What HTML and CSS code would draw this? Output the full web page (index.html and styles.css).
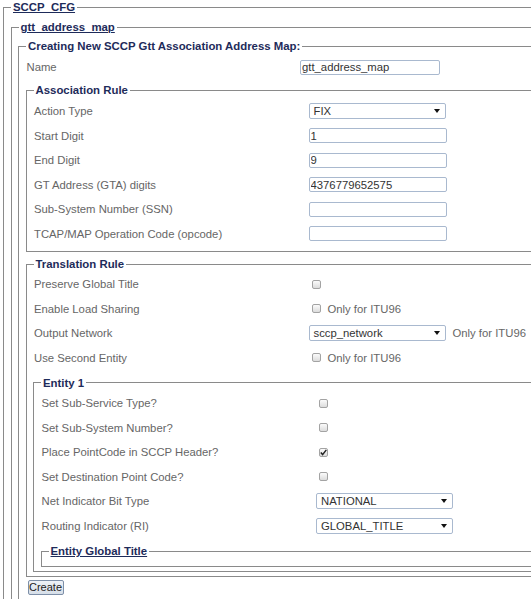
FILE: index.html
```html
<!DOCTYPE html>
<html>
<head>
<meta charset="utf-8">
<link rel="stylesheet" href="styles.css">
</head>
<body>
<fieldset class="fs fs-top">
  <legend><a href="#">SCCP_CFG</a></legend>
  <fieldset class="fs fs-gtt">
    <legend><a href="#">gtt_address_map</a></legend>
    <fieldset class="fs fs-create">
      <legend>Creating New SCCP Gtt Association Address Map:</legend>
      <div class="row row-name"><span class="lbl">Name</span><input class="txt txt-name" type="text" value="gtt_address_map"></div>

      <fieldset class="fs fs-assoc">
        <legend>Association Rule</legend>
        <div class="row"><span class="lbl">Action Type</span><div class="sel"><span>FIX</span><i class="arrow"></i></div></div>
        <div class="row"><span class="lbl">Start Digit</span><input class="txt" type="text" value="1"></div>
        <div class="row"><span class="lbl">End Digit</span><input class="txt" type="text" value="9"></div>
        <div class="row"><span class="lbl">GT Address (GTA) digits</span><input class="txt" type="text" value="4376779652575"></div>
        <div class="row"><span class="lbl">Sub-System Number (SSN)</span><input class="txt" type="text" value=""></div>
        <div class="row"><span class="lbl">TCAP/MAP Operation Code (opcode)</span><input class="txt" type="text" value=""></div>
      </fieldset>

      <fieldset class="fs fs-trans">
        <legend>Translation Rule</legend>
        <div class="row"><span class="lbl">Preserve Global Title</span><span class="ck"></span></div>
        <div class="row"><span class="lbl">Enable Load Sharing</span><span class="ck"></span><span class="note">Only for ITU96</span></div>
        <div class="row"><span class="lbl">Output Network</span><div class="sel"><span>sccp_network</span><i class="arrow"></i></div><span class="note note-sel">Only for ITU96</span></div>
        <div class="row"><span class="lbl">Use Second Entity</span><span class="ck"></span><span class="note">Only for ITU96</span></div>

        <fieldset class="fs fs-entity">
          <legend>Entity 1</legend>
          <div class="row"><span class="lbl">Set Sub-Service Type?</span><span class="ck"></span></div>
          <div class="row"><span class="lbl">Set Sub-System Number?</span><span class="ck"></span></div>
          <div class="row"><span class="lbl">Place PointCode in SCCP Header?</span><span class="ck ck-on"><svg width="7" height="7" viewBox="0 0 7 7"><path d="M0.8 3.6 L2.6 5.6 L6.3 0.9" fill="none" stroke="#222" stroke-width="1.5"/></svg></span></div>
          <div class="row"><span class="lbl">Set Destination Point Code?</span><span class="ck"></span></div>
          <div class="row"><span class="lbl">Net Indicator Bit Type</span><div class="sel"><span>NATIONAL</span><i class="arrow"></i></div></div>
          <div class="row"><span class="lbl">Routing Indicator (RI)</span><div class="sel"><span>GLOBAL_TITLE</span><i class="arrow"></i></div></div>

          <fieldset class="fs fs-egt">
            <legend><a href="#">Entity Global Title</a></legend>
          </fieldset>
        </fieldset>
      </fieldset>

      <button class="btn" type="button">Create</button>
    </fieldset>
  </fieldset>
</fieldset>
</body>
</html>
```

FILE: styles.css
```css
html {
  overflow: hidden;
}

body {
  margin: 0;
  padding-left: 3px;
  width: 760px;
  font-family: "Liberation Sans", Arial, sans-serif;
  font-size: 11.3px;
  color: #666;
  background: #fff;
}

.fs {
  border: 1px solid #8a8a8a;
  margin: 0;
  padding: 0 6.5px 5px;
  min-width: 0;
}

legend {
  padding: 0 2px;
  margin-left: 0.5px;
  font-weight: bold;
  font-size: 11.4px;
  line-height: 14px;
  color: #1e2b5a;
}

legend a {
  color: inherit;
  text-decoration: underline;
}

.fs-top { padding-top: 6px; }
.fs-gtt { padding-top: 5px; }
.fs-create { padding-top: 1.75px; }
.fs-assoc { margin-top: 3.75px; padding-top: 1.75px; padding-bottom: 5.25px; }
.fs-trans { margin-top: 5px; padding-top: 0.75px; padding-bottom: 4px; }
.fs-entity { margin-top: 5.75px; padding-top: 1.25px; padding-bottom: 4px; }
.fs-egt { margin-top: 6.25px; padding-bottom: 8px; }

.row {
  display: flex;
  align-items: center;
  height: 24.5px;
}

.lbl {
  box-sizing: border-box;
  width: 275.5px;
  flex: none;
  padding-left: 1px;
  color: #666;
}

.row-name .lbl {
  width: 274.5px;
}

.txt {
  box-sizing: border-box;
  width: 138px;
  height: 15px;
  margin: 0;
  padding: 0 0 0 1px;
  border: 1px solid #a9b9cf;
  border-radius: 2px;
  background: #fff;
  font-family: "Liberation Sans", Arial, sans-serif;
  font-size: 11.3px;
  color: #333;
  outline: none;
}

.txt-name {
  width: 140px;
}

.sel {
  box-sizing: border-box;
  display: flex;
  align-items: center;
  justify-content: space-between;
  width: 137px;
  height: 16px;
  padding: 0 5px 0 4px;
  border: 1px solid #a9b9cf;
  border-radius: 2px;
  background: #fff;
  color: #333;
}

.arrow {
  width: 0;
  height: 0;
  border-left: 3px solid transparent;
  border-right: 3px solid transparent;
  border-top: 4px solid #111;
}

.ck {
  box-sizing: border-box;
  display: inline-flex;
  align-items: center;
  justify-content: center;
  width: 9px;
  height: 9px;
  margin-left: 3px;
  border: 1px solid #a3a3a3;
  border-radius: 2px;
  background: linear-gradient(#fbfbfb, #dcdcdc);
}

.note {
  margin-left: 7px;
  color: #666;
}

.note-sel {
  margin-left: 7px;
}

.btn {
  display: block;
  box-sizing: border-box;
  margin: 3px 0 0 2px;
  width: 36px;
  height: 15px;
  padding: 0;
  border: 1px solid #7d8fa8;
  border-radius: 2px;
  background: linear-gradient(#eef2f7, #d6dee8);
  font-family: "Liberation Sans", Arial, sans-serif;
  font-size: 11px;
  line-height: 13px;
  color: #222;
}
```
